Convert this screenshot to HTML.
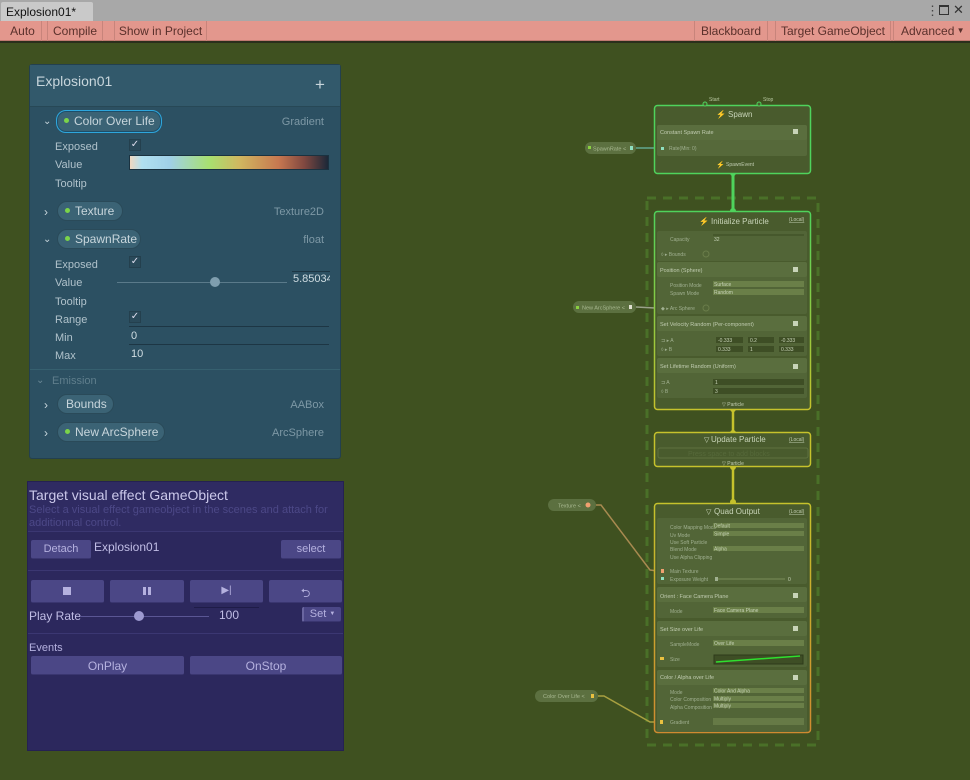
<!DOCTYPE html>
<html><head><meta charset="utf-8"><style>
*{margin:0;padding:0;box-sizing:border-box}
body{width:970px;height:780px;overflow:hidden;background:#3f5120;font-family:"Liberation Sans",sans-serif;position:relative}
.a{position:absolute;white-space:nowrap}
#tabbar{left:0;top:0;width:970px;height:21px;background:#a8a8a8}
#tab{left:1px;top:2px;width:92px;height:20px;background:#c9c9c9;border-radius:2px 2px 0 0;font-size:12px;color:#111;padding:3px 0 0 5px}
#tb{left:0;top:21px;width:970px;height:20px;background:#e3978d;border-bottom:1px solid #c07a70}
.tbb{position:absolute;top:0;height:20px;font-size:12px;color:#5a302b;padding-top:3px;text-align:center;border-left:1px solid #c8847b;border-right:1px solid #c8847b}
#dark{left:0;top:41px;width:970px;height:2px;background:#2b2f1c}
#bb{left:29px;top:64px;width:312px;height:395px;background:#2c5062;border:1px solid #23404e;border-radius:3px}
#bbh{left:0;top:0;width:310px;height:42px;background:#32596b;border-bottom:1px solid #274856}
.t{font-size:11px;color:#b0c2cb}
.d{font-size:11px;color:#7d98a5}
.pill{position:absolute;height:20px;border-radius:10px;background:#3b6375;border:1px solid #2a4a59;font-size:12px;color:#c8d6dc;padding:2px 0 0 7px}
.pill i{display:inline-block;width:5px;height:5px;border-radius:50%;background:#7bd44a;margin-right:5px;vertical-align:2px}
.chev{font-size:10px;color:#c8d6dc}
.cb{position:absolute;width:12px;height:12px;background:#2a4a5a;border:1px solid #24404e;color:#dde;font-size:10px;line-height:10px;text-align:center}
#tg{left:27px;top:481px;width:317px;height:270px;background:#2c285d;border:1px solid #252152}
.btn{position:absolute;background:#4b4786;border-radius:2px;color:#b5b1df;font-size:11px;text-align:center;border-bottom:1px solid #3a3670}
.sep{position:absolute;height:1px;background:#3b3772}
</style></head><body>
<div class="a" id="tabbar"></div>
<div class="a" id="tab">Explosion01*</div>
<div class="a" style="left:926px;top:3px;font-size:13px;color:#444">⋮</div>
<div class="a" style="left:939px;top:5px;width:10px;height:10px;border:1px solid #333;border-top-width:2px"></div>
<div class="a" style="left:953px;top:2px;font-size:13px;color:#333">✕</div>
<div class="a" id="tb">
<div class="tbb" style="left:4px;width:38px;border-left:none">Auto</div>
<div class="tbb" style="left:47px;width:56px">Compile</div>
<div class="tbb" style="left:114px;width:93px">Show in Project</div>
<div class="tbb" style="left:694px;width:74px">Blackboard</div>
<div class="tbb" style="left:775px;width:116px">Target GameObject</div>
<div class="tbb" style="left:893px;width:77px;text-align:left;padding-left:7px;border-right:none">Advanced<span style="font-size:8px;vertical-align:2px"> ▼</span></div>
</div>
<div class="a" id="dark"></div>

<div class="a" id="bb">
<div class="a" id="bbh"></div>
<div class="a" style="left:6px;top:8px;font-size:14px;color:#c8d6dc">Explosion01</div>
<div class="a" style="left:285px;top:10px;font-size:17px;color:#c8d6dc">+</div>
<div class="a chev" style="left:13px;top:51px">⌄</div>
<div class="pill" style="left:26px;top:45px;width:106px;height:23px;border:1px solid #2ea6dc;box-shadow:0 0 0 1px #1c4e6a inset;padding-top:3px"><i></i>Color Over Life</div>
<div class="a d" style="right:16px;top:51px">Gradient</div>
<div class="a t" style="left:25px;top:76px">Exposed</div><div class="cb" style="left:99px;top:74px">✓</div>
<div class="a t" style="left:25px;top:94px">Value</div>
<div class="a" style="left:99px;top:90px;width:200px;height:15px;border:1px solid #1a3240;background:linear-gradient(90deg,#f0d8c0 0%,#b0e0f0 6%,#a0d0e8 20%,#a8e070 40%,#d0b860 55%,#c87850 75%,#804840 88%,#1c2838 100%)"></div>
<div class="a t" style="left:25px;top:113px">Tooltip</div>
<div class="a chev" style="left:14px;top:140px;font-size:12px">›</div>
<div class="pill" style="left:27px;top:136px;width:66px"><i></i>Texture</div>
<div class="a d" style="right:16px;top:141px">Texture2D</div>
<div class="a chev" style="left:13px;top:169px">⌄</div>
<div class="pill" style="left:27px;top:164px;width:84px"><i></i>SpawnRate</div>
<div class="a d" style="right:16px;top:169px">float</div>
<div class="a t" style="left:25px;top:194px">Exposed</div><div class="cb" style="left:99px;top:191px">✓</div>
<div class="a t" style="left:25px;top:212px">Value</div>
<div class="a" style="left:87px;top:217px;width:170px;height:1px;background:#5a7a8a"></div>
<div class="a" style="left:180px;top:212px;width:10px;height:10px;border-radius:50%;background:#7f9eae"></div>
<div class="a" style="left:262px;top:206px;width:38px;height:1px;background:#1d3644"></div>
<div class="a" style="left:263px;top:208px;font-size:11px;color:#d0dde2;width:37px;overflow:hidden">5.85034</div>
<div class="a t" style="left:25px;top:231px">Tooltip</div>
<div class="a t" style="left:25px;top:249px">Range</div><div class="cb" style="left:99px;top:246px">✓</div>
<div class="a" style="left:99px;top:261px;width:200px;height:1px;background:#1d3644"></div>
<div class="a t" style="left:25px;top:267px">Min</div><div class="a t" style="left:101px;top:265px;color:#d0dde2">0</div>
<div class="a" style="left:99px;top:279px;width:200px;height:1px;background:#1d3644"></div>
<div class="a t" style="left:25px;top:285px">Max</div><div class="a t" style="left:101px;top:283px;color:#d0dde2">10</div>
<div class="a" style="left:0;top:304px;width:310px;height:1px;background:#36606f"></div>
<div class="a chev" style="left:6px;top:310px;color:#6a8795">⌄</div>
<div class="a" style="left:22px;top:310px;font-size:11px;color:#5f7e8c">Emission</div>
<div class="a chev" style="left:14px;top:333px;font-size:12px">›</div>
<div class="pill" style="left:27px;top:329px;width:57px;padding-left:8px">Bounds</div>
<div class="a d" style="right:16px;top:334px">AABox</div>
<div class="a chev" style="left:14px;top:361px;font-size:12px">›</div>
<div class="pill" style="left:27px;top:357px;width:108px"><i></i>New ArcSphere</div>
<div class="a d" style="right:16px;top:362px">ArcSphere</div>
</div>

<div class="a" id="tg">
<div class="a" style="left:0;top:0;width:315px;height:49px;background:#2f2b62"></div>
<div class="a" style="left:1px;top:5px;font-size:14px;color:#cbc8ea">Target visual effect GameObject</div>
<div class="a" style="left:1px;top:22px;font-size:11px;color:#4c4887;line-height:13px;white-space:normal;width:310px">Select a visual effect gameobject in the scenes and attach for additionnal control.</div>
<div class="sep" style="left:0;top:49px;width:315px"></div>
<div class="btn" style="left:3px;top:58px;width:60px;height:19px;padding-top:3px">Detach</div>
<div class="a" style="left:66px;top:58px;font-size:12px;color:#c0bde5">Explosion01</div>
<div class="btn" style="left:253px;top:58px;width:60px;height:19px;padding-top:3px">select</div>
<div class="sep" style="left:0;top:88px;width:315px"></div>
<div class="btn" style="left:3px;top:98px;width:73px;height:23px"><div style="position:absolute;left:32px;top:7px;width:8px;height:8px;background:#b5b1df"></div></div>
<div class="btn" style="left:82px;top:98px;width:74px;height:23px"><div style="position:absolute;left:33px;top:7px;width:3px;height:8px;background:#b5b1df"></div><div style="position:absolute;left:38px;top:7px;width:3px;height:8px;background:#b5b1df"></div></div>
<div class="btn" style="left:162px;top:98px;width:73px;height:23px;font-size:10px;padding-top:5px;color:#b5b1df">▶|</div>
<div class="btn" style="left:241px;top:98px;width:73px;height:23px;font-size:12px;padding-top:4px">⮌</div>
<div class="a" style="left:1px;top:127px;font-size:12px;color:#c0bde5">Play Rate</div>
<div class="a" style="left:52px;top:134px;width:129px;height:1px;background:#5a5694"></div>
<div class="a" style="left:106px;top:129px;width:10px;height:10px;border-radius:50%;background:#9d9ad0"></div>
<div class="a" style="left:166px;top:125px;width:65px;height:1px;background:#1f1c48"></div>
<div class="a" style="left:191px;top:126px;font-size:12px;color:#c0bde5">100</div>
<div class="btn" style="left:274px;top:125px;width:39px;height:15px;font-size:11px;padding-top:1px;border-left:2px solid #6a66a0">Set <span style="font-size:6px;vertical-align:2px">▼</span></div>
<div class="sep" style="left:0;top:151px;width:315px"></div>
<div class="a" style="left:1px;top:160px;font-size:11px;color:#b5b1df">Events</div>
<div class="btn" style="left:3px;top:174px;width:153px;height:19px;font-size:12px;padding-top:3px">OnPlay</div>
<div class="btn" style="left:162px;top:174px;width:152px;height:19px;font-size:12px;padding-top:3px">OnStop</div>
</div>

<svg class="a" style="left:0;top:0" width="970" height="780" font-family="Liberation Sans, sans-serif">
<defs>
<linearGradient id="gi" x1="0" y1="0" x2="0" y2="1"><stop offset="0" stop-color="#4fd35c"/><stop offset="1" stop-color="#c6c22c"/></linearGradient>
<linearGradient id="gq" x1="0" y1="0" x2="0" y2="1"><stop offset="0" stop-color="#c6c22c"/><stop offset="1" stop-color="#d08a30"/></linearGradient>
</defs>
<rect x="647" y="198" width="171" height="547" fill="none" stroke="#4a7028" stroke-width="3" stroke-dasharray="9,7"/>
<path d="M636 148 L655 148" stroke="#62a890" stroke-width="1.5" fill="none"/>
<path d="M636 307 L655 308" stroke="#9aa28a" stroke-width="1.5" fill="none"/>
<path d="M596 505 L601 505 L650 570 L658 571" stroke="#a88a50" stroke-width="1.5" fill="none"/>
<path d="M598 696 L604 696 L650 722 L658 722" stroke="#a8a040" stroke-width="1.5" fill="none"/>
<path d="M733 173 L733 211" stroke="#4fd35c" stroke-width="3"/>
<path d="M733 409 L733 432" stroke="#c6c22c" stroke-width="2.5"/>
<path d="M733 467 L733 503" stroke="#c6c22c" stroke-width="2.5"/>
<circle cx="733" cy="173" r="3" fill="#4fd35c"/><circle cx="733" cy="211" r="3" fill="#4fd35c"/>
<circle cx="733" cy="409" r="3" fill="#c6c22c"/><circle cx="733" cy="433" r="3" fill="#c6c22c"/>
<circle cx="733" cy="467" r="3" fill="#c6c22c"/><circle cx="733" cy="502" r="3" fill="#c6c22c"/>
<rect x="585" y="142" width="51" height="12" rx="6" fill="#5c7040"/>
<rect x="588" y="146" width="3" height="3" fill="#8ad040"/><text x="593" y="150.5" font-size="5.5" fill="#a8b890">SpawnRate &lt;</text><rect x="630" y="146" width="3" height="4" fill="#8fe0c0"/>
<rect x="573" y="301" width="63" height="12" rx="6" fill="#5c7040"/>
<rect x="576" y="306" width="3" height="3" fill="#8ad040"/><text x="582" y="309.5" font-size="5.5" fill="#a8b890">New ArcSphere  &lt;</text><rect x="629" y="305" width="3" height="4" fill="#e0e0d0"/>
<rect x="548" y="499" width="48" height="12" rx="6" fill="#5c7040"/>
<text x="558" y="507.5" font-size="5.5" fill="#a8b890">Texture  &lt;</text><circle cx="588" cy="505" r="2.5" fill="#f0a070"/>
<rect x="535" y="690" width="63" height="12" rx="6" fill="#5c7040"/>
<text x="543" y="698" font-size="5.5" fill="#a8b890">Color Over Life  &lt;</text><rect x="591" y="694" width="3" height="4" fill="#e8c040"/>

<rect x="654.5" y="105.5" width="156" height="68" rx="3" fill="#495b2d" stroke="#4fd35c" stroke-width="1.5"/>
<circle cx="705" cy="104" r="2" fill="#495b2d" stroke="#4fd35c"/><circle cx="759" cy="104" r="2" fill="#495b2d" stroke="#4fd35c"/>
<text x="709" y="101" font-size="5" fill="#b8c8a0">Start</text><text x="763" y="101" font-size="5" fill="#b8c8a0">Stop</text>
<text x="716" y="117" font-size="8" fill="#d0dcc0">⚡</text><text x="728" y="117" font-size="8" fill="#c8d4b8">Spawn</text>
<rect x="657" y="125" width="150" height="31" rx="2" fill="#56693a"/>
<rect x="657" y="125" width="150" height="15" rx="2" fill="#5a6e3e"/>
<text x="660" y="134" font-size="5.5" fill="#c0ccb0">Constant Spawn Rate</text>
<rect x="793" y="129" width="5" height="5" fill="#c8d4b8"/>
<rect x="661" y="147" width="3" height="3" fill="#8fe0c0"/><text x="669" y="150" font-size="5" fill="#a0b090">Rate(Min: 0)</text>
<text x="716" y="167" font-size="7" fill="#d0dcc0">⚡</text><text x="726" y="166" font-size="5" fill="#c0ccb0">SpawnEvent</text>

<rect x="654.5" y="211.5" width="156" height="198" rx="3" fill="#495b2d" stroke="url(#gi)" stroke-width="1.5"/>
<text x="699" y="224" font-size="8" fill="#d0dcc0">⚡</text><text x="711" y="224" font-size="8" fill="#c8d4b8">Initialize Particle</text>
<text x="789" y="221" font-size="5" fill="#c0ccb0" text-decoration="underline">(Local)</text>
<rect x="657" y="231" width="150" height="30" rx="2" fill="#526537"/>
<text x="670" y="241" font-size="5" fill="#a0b090">Capacity</text><text x="714" y="241" font-size="5" fill="#c8d4b8">32</text><line x1="713" y1="235" x2="804" y2="235" stroke="#3a4a22"/>
<text x="661" y="256" font-size="5" fill="#a0b090">◊ ▸ Bounds</text><circle cx="706" cy="254" r="3" fill="none" stroke="#6a7d4a"/>
<rect x="657" y="262" width="150" height="52" rx="2" fill="#526537"/>
<rect x="657" y="262" width="150" height="15" rx="2" fill="#5a6e3e"/>
<text x="660" y="272" font-size="5.5" fill="#c0ccb0">Position (Sphere)</text><rect x="793" y="267" width="5" height="5" fill="#c8d4b8"/>
<rect x="713" y="281" width="91" height="6" fill="#6a7f48"/><rect x="713" y="289" width="91" height="6" fill="#6a7f48"/>
<text x="670" y="287" font-size="5" fill="#a0b090">Position Mode</text><text x="670" y="295" font-size="5" fill="#a0b090">Spawn Mode</text>
<text x="714" y="286" font-size="5" fill="#c8d4b8">Surface</text><text x="714" y="294" font-size="5" fill="#c8d4b8">Random</text>
<text x="661" y="310" font-size="5" fill="#a0b090">◆ ▸ Arc Sphere</text><circle cx="706" cy="308" r="3" fill="none" stroke="#6a7d4a"/>
<rect x="657" y="316" width="150" height="40" rx="2" fill="#526537"/>
<rect x="657" y="316" width="150" height="15" rx="2" fill="#5a6e3e"/>
<text x="660" y="326" font-size="5.5" fill="#c0ccb0">Set Velocity Random (Per-component)</text><rect x="793" y="321" width="5" height="5" fill="#c8d4b8"/>
<text x="661" y="342" font-size="5" fill="#a0b090">⊐ ▸ A</text><text x="661" y="351" font-size="5" fill="#a0b090">◊ ▸ B</text>
<rect x="716" y="337" width="27" height="6" fill="#3e4e25"/><rect x="748" y="337" width="26" height="6" fill="#3e4e25"/><rect x="779" y="337" width="25" height="6" fill="#3e4e25"/>
<rect x="716" y="346" width="27" height="6" fill="#3e4e25"/><rect x="748" y="346" width="26" height="6" fill="#3e4e25"/><rect x="779" y="346" width="25" height="6" fill="#3e4e25"/>
<text x="718" y="342" font-size="5" fill="#c8d4b8">-0.333</text><text x="750" y="342" font-size="5" fill="#c8d4b8">0.2</text><text x="781" y="342" font-size="5" fill="#c8d4b8">-0.333</text>
<text x="718" y="351" font-size="5" fill="#c8d4b8">0.333</text><text x="750" y="351" font-size="5" fill="#c8d4b8">1</text><text x="781" y="351" font-size="5" fill="#c8d4b8">0.333</text>
<rect x="657" y="358" width="150" height="40" rx="2" fill="#526537"/>
<rect x="657" y="358" width="150" height="15" rx="2" fill="#5a6e3e"/>
<text x="660" y="368" font-size="5.5" fill="#c0ccb0">Set Lifetime Random (Uniform)</text><rect x="793" y="364" width="5" height="5" fill="#c8d4b8"/>
<rect x="713" y="379" width="91" height="6" fill="#3e4e25"/><rect x="713" y="388" width="91" height="6" fill="#3e4e25"/>
<text x="661" y="384" font-size="5" fill="#a0b090">⊐    A</text><text x="661" y="393" font-size="5" fill="#a0b090">◊    B</text>
<text x="715" y="384" font-size="5" fill="#c8d4b8">1</text><text x="715" y="393" font-size="5" fill="#c8d4b8">3</text>
<text x="722" y="406" font-size="5" fill="#c0ccb0">▽ Particle</text>

<rect x="654.5" y="432.5" width="156" height="34" rx="3" fill="#495b2d" stroke="#c6c22c" stroke-width="1.5"/>
<text x="704" y="442" font-size="7" fill="#d0dcc0">▽</text><text x="711" y="442" font-size="8" fill="#c8d4b8">Update Particle</text>
<text x="789" y="441" font-size="5" fill="#c0ccb0" text-decoration="underline">(Local)</text>
<rect x="658" y="448" width="150" height="10" rx="2" fill="none" stroke="#5e7240"/>
<text x="688" y="456" font-size="7" fill="#56693a">Press space to add blocks</text>
<text x="722" y="465" font-size="5" fill="#c0ccb0">▽ Particle</text>

<rect x="654.5" y="503.5" width="156" height="229" rx="3" fill="#495b2d" stroke="url(#gq)" stroke-width="1.5"/>
<text x="706" y="514" font-size="7" fill="#d0dcc0">▽</text><text x="714" y="514" font-size="8" fill="#c8d4b8">Quad Output</text>
<text x="789" y="513" font-size="5" fill="#c0ccb0" text-decoration="underline">(Local)</text>
<rect x="657" y="518" width="150" height="66" rx="2" fill="#526537"/>
<text x="670" y="529" font-size="5" fill="#a0b090">Color Mapping Mode</text><text x="670" y="537" font-size="5" fill="#a0b090">Uv Mode</text>
<text x="670" y="544" font-size="5" fill="#a0b090">Use Soft Particle</text><text x="670" y="551" font-size="5" fill="#a0b090">Blend Mode</text><text x="670" y="559" font-size="5" fill="#a0b090">Use Alpha Clipping</text>
<rect x="713" y="523" width="91" height="5" fill="#6a7f48"/><rect x="713" y="531" width="91" height="5" fill="#6a7f48"/><rect x="713" y="546" width="91" height="5" fill="#6a7f48"/>
<text x="714" y="527.5" font-size="5" fill="#c8d4b8">Default</text><text x="714" y="535.5" font-size="5" fill="#c8d4b8">Simple</text><text x="714" y="550.5" font-size="5" fill="#c8d4b8">Alpha</text>
<rect x="661" y="569" width="3" height="4" fill="#f0a070"/><text x="670" y="573" font-size="5" fill="#a0b090">Main Texture</text>
<rect x="661" y="577" width="3" height="3" fill="#8fe0c0"/><text x="670" y="581" font-size="5" fill="#a0b090">Exposure Weight</text>
<line x1="716" y1="579" x2="785" y2="579" stroke="#7a8d5a"/><rect x="715" y="577" width="3" height="4" fill="#a0b090"/><text x="788" y="581" font-size="5" fill="#c8d4b8">0</text>
<rect x="657" y="587" width="150" height="31" rx="2" fill="#526537"/>
<rect x="657" y="587" width="150" height="15" rx="2" fill="#5a6e3e"/>
<text x="660" y="598" font-size="5.5" fill="#c0ccb0">Orient : Face Camera Plane</text><rect x="793" y="593" width="5" height="5" fill="#c8d4b8"/>
<text x="670" y="613" font-size="5" fill="#a0b090">Mode</text><rect x="713" y="607" width="91" height="6" fill="#6a7f48"/><text x="714" y="612" font-size="5" fill="#c8d4b8">Face Camera Plane</text>
<rect x="657" y="621" width="150" height="46" rx="2" fill="#526537"/>
<rect x="657" y="621" width="150" height="15" rx="2" fill="#5a6e3e"/>
<text x="660" y="631" font-size="5.5" fill="#c0ccb0">Set Size over Life</text><rect x="793" y="626" width="5" height="5" fill="#c8d4b8"/>
<text x="670" y="646" font-size="5" fill="#a0b090">SampleMode</text><rect x="713" y="640" width="91" height="6" fill="#6a7f48"/><text x="714" y="645" font-size="5" fill="#c8d4b8">Over Life</text>
<rect x="660" y="657" width="4" height="3" fill="#e8c040"/><text x="670" y="661" font-size="5" fill="#a0b090">Size</text>
<rect x="714" y="655" width="89" height="9" fill="#3e4e25" stroke="#2e3a1a"/><path d="M716 662 L800 656" stroke="#2ee02e" stroke-width="1.5"/>
<rect x="657" y="670" width="150" height="62" rx="2" fill="#526537"/>
<rect x="657" y="670" width="150" height="15" rx="2" fill="#5a6e3e"/>
<text x="660" y="679" font-size="5.5" fill="#c0ccb0">Color / Alpha over Life</text><rect x="793" y="675" width="5" height="5" fill="#c8d4b8"/>
<text x="670" y="694" font-size="5" fill="#a0b090">Mode</text><text x="670" y="701" font-size="5" fill="#a0b090">Color Composition</text><text x="670" y="709" font-size="5" fill="#a0b090">Alpha Composition</text>
<rect x="713" y="688" width="91" height="5" fill="#6a7f48"/><rect x="713" y="696" width="91" height="5" fill="#6a7f48"/><rect x="713" y="703" width="91" height="5" fill="#6a7f48"/>
<text x="714" y="692.5" font-size="5" fill="#c8d4b8">Color And Alpha</text><text x="714" y="700.5" font-size="5" fill="#c8d4b8">Multiply</text><text x="714" y="707.5" font-size="5" fill="#c8d4b8">Multiply</text>
<rect x="660" y="720" width="3" height="4" fill="#e8c040"/><text x="670" y="724" font-size="5" fill="#a0b090">Gradient</text>
<rect x="713" y="718" width="91" height="7" fill="#667a46"/>
</svg>
</body></html>
